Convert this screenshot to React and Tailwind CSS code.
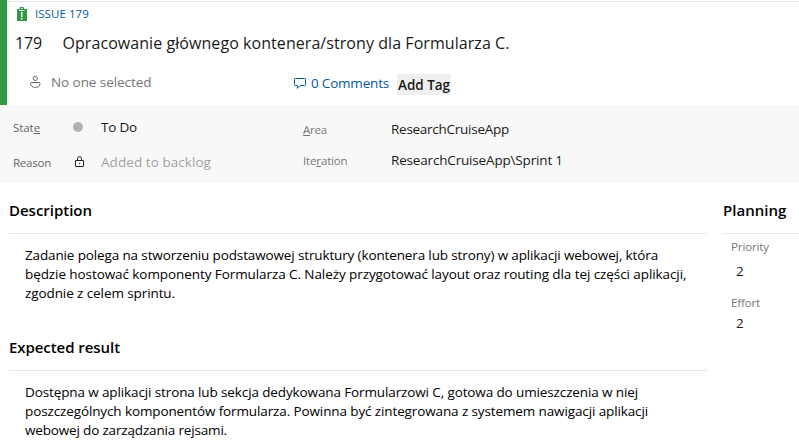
function IssueIcon() {
  return (
    <svg width="12" height="15" viewBox="0 0 12 15" className="shrink-0">
      <path d="M1 2h2.5V1.200A1.200 1.200 0 0 1 4.700 0h2.100A1.200 1.200 0 0 1 8 1.200V2h3v12H1z" fill="#339947" />
      <path d="M3.200 3.500h5.100M5.200 1.500h1.200" stroke="#fff" strokeWidth="1" />
      <path d="M5 5h1.500v5H5zM5 11h1.500v1.500H5z" fill="#fff" />
    </svg>
  );
}

function PersonIcon() {
  return (
    <svg width="12" height="14" viewBox="0 0 12 14" fill="none" stroke="#666" strokeWidth="1" className="shrink-0">
      <circle cx="5.300" cy="3.400" r="2.100" />
      <path d="M1.500 7.500h7.600a.9.9 0 0 1 .9.9c0 2.600-1.900 4-4.700 4S.6 11 .6 8.400a.9.9 0 0 1 .9-.9z" />
    </svg>
  );
}

function CommentIcon() {
  return (
    <svg width="14" height="13" viewBox="0 0 14 13" fill="none" stroke="#005a9e" strokeWidth="1" className="shrink-0">
      <path d="M2.300 1.500h9.400a.8.8 0 0 1 .8.8v5.400a.8.8 0 0 1-.8.8H7.300l-3 2.800V8.500h-2a.8.8 0 0 1-.8-.8V2.300a.8.8 0 0 1 .8-.8z" />
    </svg>
  );
}

function LockIcon() {
  return (
    <svg width="11" height="13" viewBox="0 0 11 13" fill="none" stroke="#222" strokeWidth="1" className="shrink-0">
      <rect x="1.500" y="4.500" width="8" height="6" rx=".4" />
      <path d="M3.500 4.500V2.700a2 2 0 0 1 4 0v1.800" />
      <rect x="5" y="7" width="1.200" height="1.200" fill="#222" stroke="none" />
    </svg>
  );
}

function Header() {
  return (
    <header className="flex h-[105px] border-l-[7px] border-[#339947]">
      <div className="mt-px flex flex-1 flex-col border-t border-[#e8e8e8] pl-[8px]">
        <div className="mt-[4px] flex h-4 items-center gap-[7px] pl-px text-[11.5px] leading-4 tracking-[0.05px] text-[#005a9e]">
          <IssueIcon />
          <span>ISSUE 179</span>
        </div>
        <h1 className="mt-[9px] flex text-[16px] leading-6 text-[#1a1a1a]">
          <span className="w-[47.5px] tracking-[-0.1px]">179</span>
          <span className="tracking-[0.062px]">Opracowanie głównego kontenera/strony dla Formularza C.</span>
        </h1>
        <div className="mt-[17px] flex items-start text-[13.5px] leading-5">
          <div className="flex w-[278px] pl-[15px] text-[#767676]">
            <span className="mt-[3px] mr-[9px]"><PersonIcon /></span>
            <span className="tracking-[-0.065px]">No one selected</span>
          </div>
          <div className="mt-px flex w-[104px] text-[#005a9e]">
            <span className="mt-[4px] mr-[4px]"><CommentIcon /></span>
            <span className="tracking-[-0.195px]">0 Comments</span>
          </div>
          <button className="mt-[2px] h-[21px] w-[54px] rounded-[2px] bg-[#efefef] pt-px text-center font-semibold leading-[21px] tracking-[-0.026px] text-[#1a1a1a]">
            Add Tag
          </button>
        </div>
      </div>
    </header>
  );
}

function Fields() {
  return (
    <section className="flex h-[78px] bg-[#f8f8f8] pl-[13px] text-[13.5px] leading-5 text-[#1a1a1a]">
      <div className="w-[290px] pt-3">
        <div className="flex h-[35px]">
          <span className="w-[60px] pt-px text-[11.5px] tracking-[-0.07px] text-[#666]">Stat<u className="underline-offset-1">e</u></span>
          <span className="mt-[5px] mr-[18px] size-[10px] rounded-full bg-[#b2b2b2]" />
          <span className="tracking-[-0.196px]">To Do</span>
        </div>
        <div className="flex">
          <span className="w-[61px] pt-px text-[11.5px] tracking-[-0.233px] text-[#666]">Reason</span>
          <span className="mt-[4px] mr-[16px]"><LockIcon /></span>
          <span className="tracking-[0.061px] text-[#a0a0a0]">Added to backlog</span>
        </div>
      </div>
      <div className="pt-[14px]">
        <div className="flex h-[31px]">
          <span className="w-[88px] pt-px text-[11.5px] tracking-[-0.205px] text-[#767676]"><u className="underline-offset-1">A</u>rea</span>
          <span className="tracking-[-0.263px]">ResearchCruiseApp</span>
        </div>
        <div className="flex">
          <span className="w-[88px] pt-px text-[11.5px] tracking-[-0.148px] text-[#767676]">Ite<u className="underline-offset-1">r</u>ation</span>
          <span className="tracking-[-0.17px]">ResearchCruiseApp\Sprint 1</span>
        </div>
      </div>
    </section>
  );
}

export default function App() {
  return (
    <div className="h-[446px] w-[799px] overflow-hidden whitespace-nowrap bg-white font-['Open_Sans','Noto_Sans',sans-serif] text-black">
      <Header />
      <Fields />
      <main className="flex pl-[9px] pt-[15px] text-[13.5px] leading-[19px]">
        <div className="mr-4 w-[698px]">
          <section className="h-[137px]">
            <h2 className="h-9 border-b border-[#e8e8e8] text-[15px] font-semibold leading-6 tracking-[-0.016px]">Description</h2>
            <div className="pl-4 pt-[12px]">
              <p className="tracking-[-0.134px]">Zadanie polega na stworzeniu podstawowej struktury (kontenera lub strony) w aplikacji webowej, która</p>
              <p className="tracking-[-0.08px]">będzie hostować komponenty Formularza C. Należy przygotować layout oraz routing dla tej części aplikacji,</p>
              <p className="tracking-[-0.093px]">zgodnie z celem sprintu.</p>
            </div>
          </section>
          <section>
            <h2 className="h-9 border-b border-[#e8e8e8] text-[15px] font-semibold leading-6 tracking-[-0.062px]">Expected result</h2>
            <div className="pl-4 pt-[12px]">
              <p className="tracking-[-0.119px]">Dostępna w aplikacji strona lub sekcja dedykowana Formularzowi C, gotowa do umieszczenia w niej</p>
              <p className="tracking-[-0.117px]">poszczególnych komponentów formularza. Powinna być zintegrowana z systemem nawigacji aplikacji</p>
              <p className="tracking-[-0.165px]">webowej do zarządzania rejsami.</p>
            </div>
          </section>
        </div>
        <aside className="flex-1">
          <h2 className="h-9 border-b border-[#e8e8e8] text-[15px] font-semibold leading-6 tracking-[0.02px]">Planning</h2>
          <dl className="pl-2 pt-[3px] leading-5">
            <dt className="h-6 text-[11.5px] tracking-[-0.113px] text-[#767676]">Priority</dt>
            <dd className="h-8 pl-[5px] text-[#1a1a1a]">2</dd>
            <dt className="h-5 text-[11.5px] tracking-[-0.141px] text-[#767676]">Effort</dt>
            <dd className="pl-[5px] text-[#1a1a1a]">2</dd>
          </dl>
        </aside>
      </main>
    </div>
  );
}
